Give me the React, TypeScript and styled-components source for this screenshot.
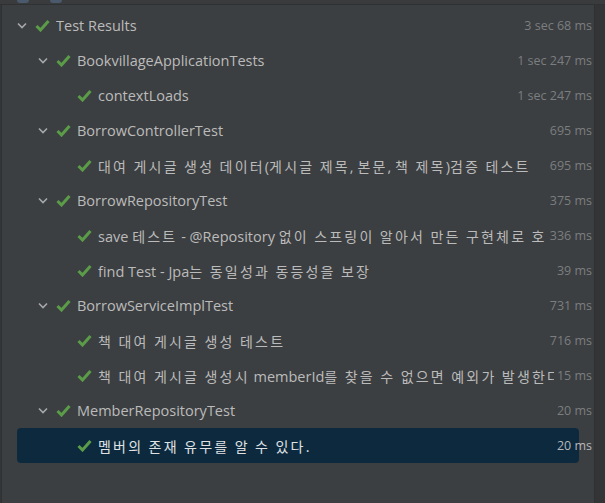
import React from 'react'
import styled, { createGlobalStyle } from 'styled-components'

const GlobalStyle = createGlobalStyle`
  html, body {
    margin: 0;
    padding: 0;
    background: #3c3f41;
  }
  #root {
    height: 503px;
  }
`

const Window = styled.div`
  width: 605px;
  height: 503px;
  display: flex;
  flex-direction: column;
  background: #3c3f41;
  overflow: hidden;
`
const Toolbar = styled.div`
  height: 4px;
  flex-shrink: 0;
  background: #393b3d;
  border-bottom: 1px solid #2f3133;
  display: flex;
  gap: 21px;
  padding-left: 17px;
`
const ToolbarStub = styled.div`
  width: 12px;
  height: 3px;
  border-radius: 0 0 4px 4px;
  background: #4a5a6c;
`
const Body = styled.div`
  flex: 1;
  display: flex;
  min-height: 0;
`
const Gutter = styled.div`
  width: 2px;
  flex-shrink: 0;
  background: #333537;
  border-right: 1px solid #2f3133;
  box-sizing: border-box;
`
const Tree = styled.div`
  flex: 1;
  min-width: 0;
  padding-top: 3px;
  display: flex;
  flex-direction: column;
`
const ScrollStrip = styled.div`
  width: 10px;
  flex-shrink: 0;
  background: #323436;
  border-left: 1px solid #2e3032;
`
const Row = styled.div<{ $level: number; $selected?: boolean }>`
  position: relative;
  height: 35px;
  display: flex;
  align-items: center;
  padding-left: ${({ $level }) => 12 + $level * 21}px;
  padding-right: 2px;
  font-family: 'Open Sans', 'Noto Sans CJK KR', sans-serif;
  font-size: 14.5px;
  color: ${({ $selected }) => ($selected ? '#dfe1e3' : '#bbbbbb')};

  &::before {
    content: '';
    display: ${({ $selected }) => ($selected ? 'block' : 'none')};
    position: absolute;
    left: 15px;
    right: 15px;
    top: 0;
    bottom: 0;
    border-radius: 4px;
    background: #0d293e;
  }
`
const ChevronSlot = styled.span`
  position: relative;
  width: 21px;
  height: 16px;
  flex-shrink: 0;
  display: flex;
  align-items: center;
`
const CheckSlot = styled.span`
  position: relative;
  width: 21px;
  height: 16px;
  flex-shrink: 0;
  display: flex;
  align-items: center;
`
const Name = styled.span`
  position: relative;
  flex: 1;
  min-width: 0;
  white-space: nowrap;
  overflow: hidden;
`
const Hangul = styled.span`
  font-family: 'Noto Sans CJK KR', sans-serif;
  font-size: 14px;
  letter-spacing: 2.2px;
`
const Duration = styled.span<{ $selected?: boolean }>`
  position: relative;
  flex-shrink: 0;
  margin-left: 3px;
  font-size: 12.5px;
  color: ${({ $selected }) => ($selected ? '#b4b8bc' : '#7b7e80')};
`

const Chevron = () => (
  <svg width="10" height="7" viewBox="0 0 10 7" style={{ marginLeft: 3 }}>
    <path d="M1 1.5 L5 5.5 L9 1.5" fill="none" stroke="#a6a8aa" strokeWidth="1.6" />
  </svg>
)

const Check = () => (
  <svg width="15" height="13" viewBox="0 0 15 13">
    <path d="M1.5 7 L5.5 11 L13.5 2" fill="none" stroke="#5b9c49" strokeWidth="3" />
  </svg>
)

// Hangul is rendered wider than Latin in the original, so give it its own run
const splitHangul = (text: string) =>
  text.split(/([\uAC00-\uD7A3](?:[\uAC00-\uD7A3 ]*[\uAC00-\uD7A3])?)/).map((part, i) =>
    /[\uAC00-\uD7A3]/.test(part) ? <Hangul key={i}>{part}</Hangul> : part
  )

type TestNode = {
  name: string
  time: string
  level: number
  group?: boolean
  selected?: boolean
}

const tests: TestNode[] = [
  { name: 'Test Results', time: '3 sec 68 ms', level: 0, group: true },
  { name: 'BookvillageApplicationTests', time: '1 sec 247 ms', level: 1, group: true },
  { name: 'contextLoads', time: '1 sec 247 ms', level: 2 },
  { name: 'BorrowControllerTest', time: '695 ms', level: 1, group: true },
  { name: '대여 게시글 생성 데이터(게시글 제목, 본문, 책 제목)검증 테스트', time: '695 ms', level: 2 },
  { name: 'BorrowRepositoryTest', time: '375 ms', level: 1, group: true },
  { name: 'save 테스트 - @Repository 없이 스프링이 알아서 만든 구현체로 호출', time: '336 ms', level: 2 },
  { name: 'find Test - Jpa는 동일성과 동등성을 보장', time: '39 ms', level: 2 },
  { name: 'BorrowServiceImplTest', time: '731 ms', level: 1, group: true },
  { name: '책 대여 게시글 생성 테스트', time: '716 ms', level: 2 },
  { name: '책 대여 게시글 생성시 memberId를 찾을 수 없으면 예외가 발생한다', time: '15 ms', level: 2 },
  { name: 'MemberRepositoryTest', time: '20 ms', level: 1, group: true },
  { name: '멤버의 존재 유무를 알 수 있다.', time: '20 ms', level: 2, selected: true },
]

const App = (): JSX.Element => {
  return (
    <Window>
      <GlobalStyle />
      <Toolbar>
        <ToolbarStub />
        <ToolbarStub />
      </Toolbar>
      <Body>
        <Gutter />
        <Tree>
          {tests.map((t) => (
            <Row key={t.name} $level={t.level} $selected={t.selected}>
              <ChevronSlot>{t.group && <Chevron />}</ChevronSlot>
              <CheckSlot>
                <Check />
              </CheckSlot>
              <Name>{splitHangul(t.name)}</Name>
              <Duration $selected={t.selected}>{t.time}</Duration>
            </Row>
          ))}
        </Tree>
        <ScrollStrip />
      </Body>
    </Window>
  )
}

export default App
